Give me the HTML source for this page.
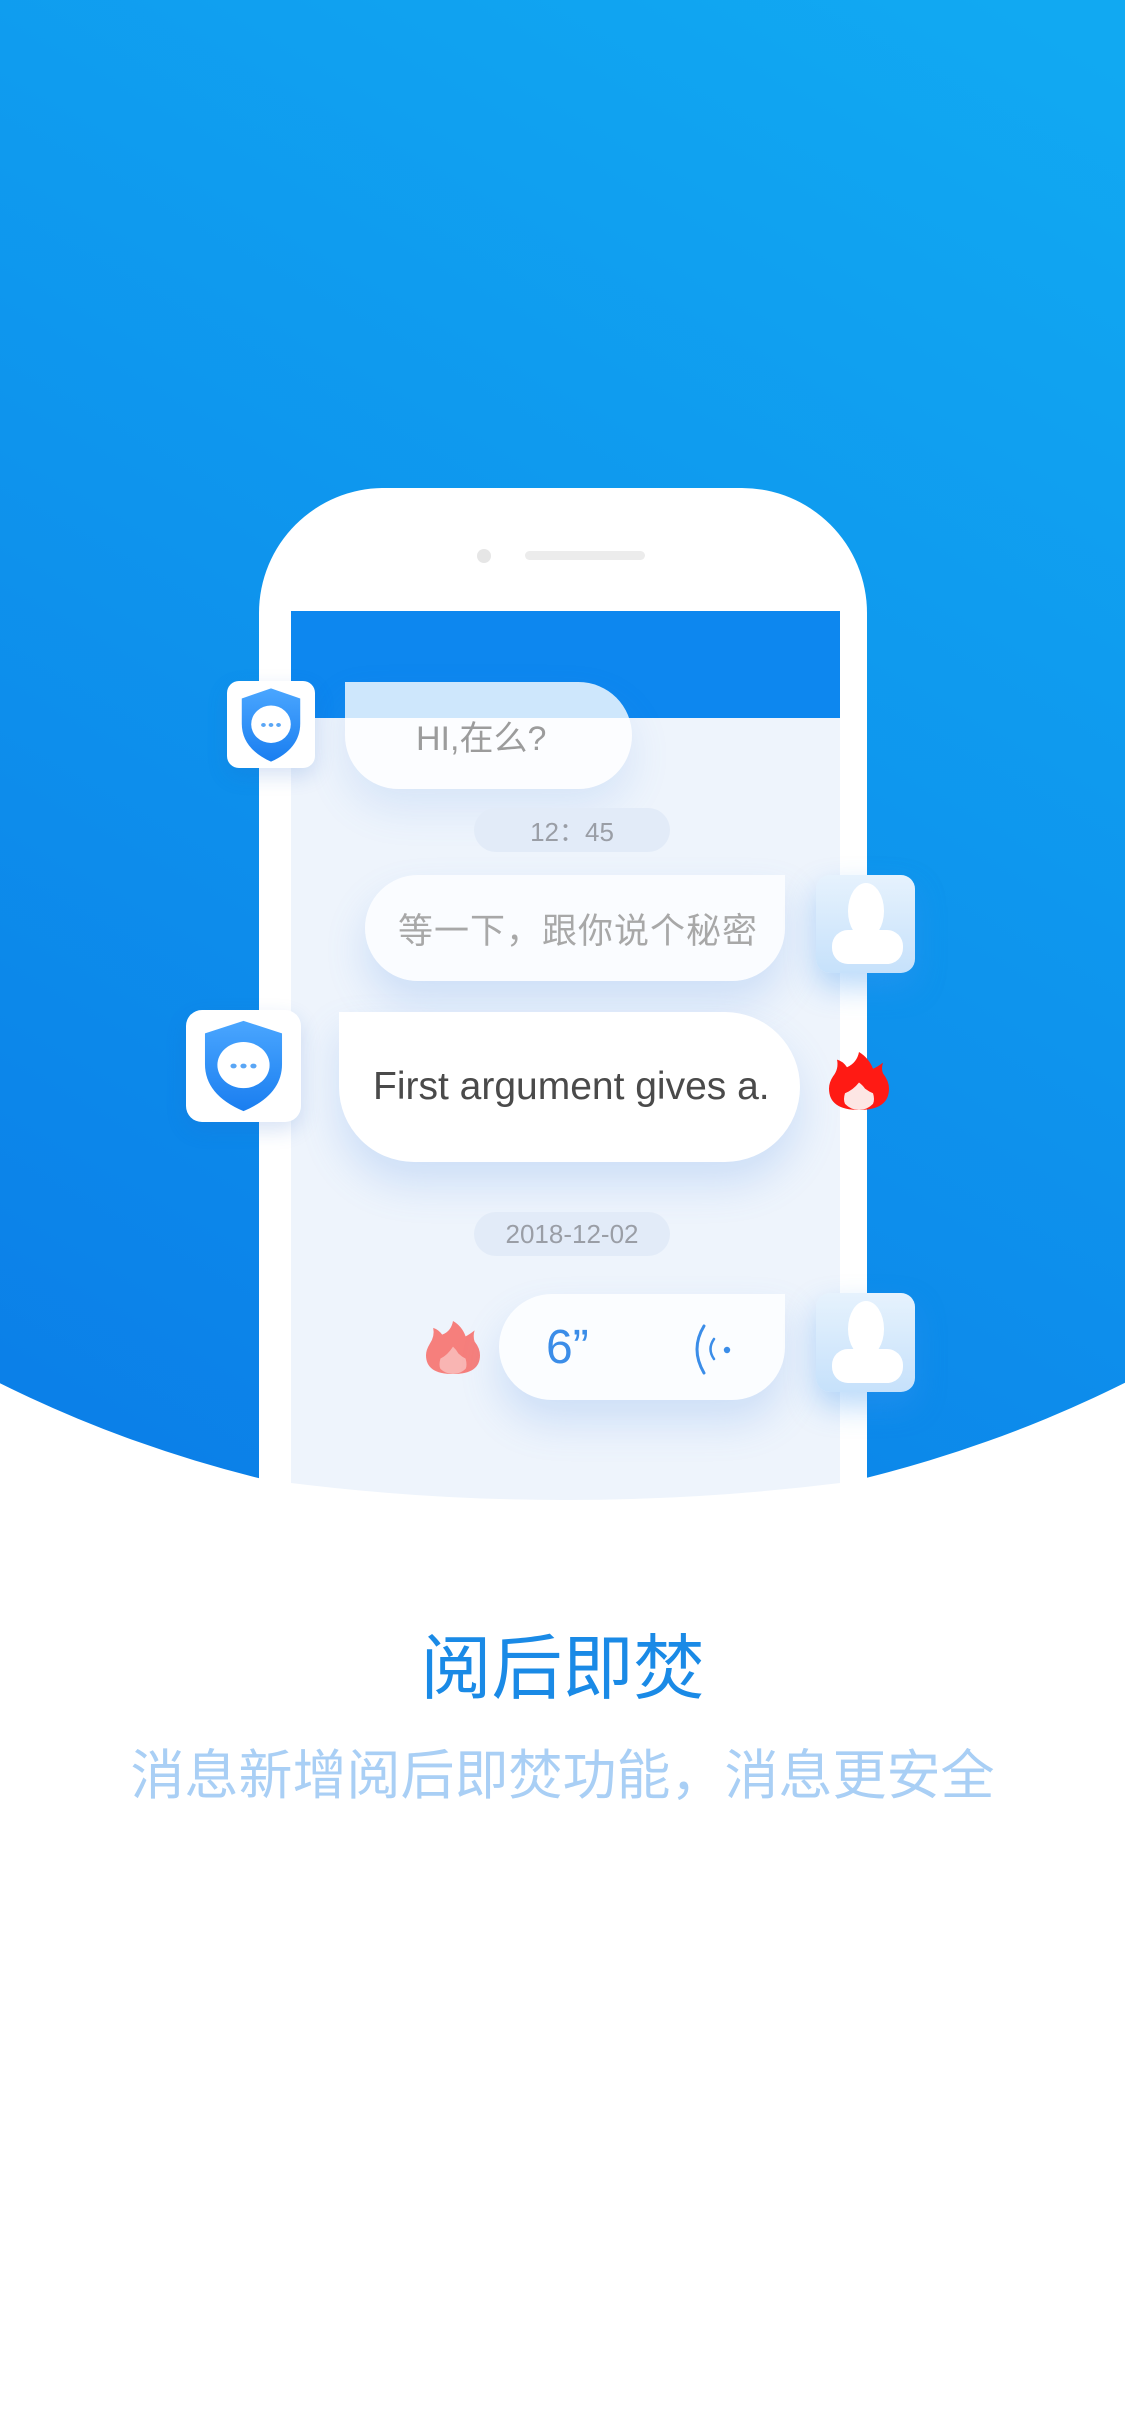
<!DOCTYPE html>
<html><head><meta charset="utf-8"><style>
*{margin:0;padding:0;box-sizing:border-box}
body{width:1125px;height:2436px;background:#fff;position:relative;overflow:hidden;font-family:"Liberation Sans","Noto Sans CJK SC",sans-serif}
.a{position:absolute}
.bub{position:absolute;display:flex;align-items:center;box-shadow:0 22px 40px rgba(90,150,230,0.22)}
.pill{position:absolute;background:#e2ebf8;border-radius:30px;color:#9a9ea6;display:flex;align-items:center;justify-content:center}
.sq{position:absolute;background:#fff;border-radius:14px;box-shadow:0 8px 20px rgba(40,100,200,0.18)}
.us{position:absolute;border-radius:14px;background:linear-gradient(180deg,#e6f2fd,#c6e1fb);box-shadow:0 14px 30px rgba(60,150,240,0.35);overflow:hidden}
</style></head><body>
<svg class="a" style="left:0;top:0" width="1125" height="1600">
<defs><linearGradient id="bg" gradientUnits="userSpaceOnUse" x1="1000" y1="0" x2="150" y2="1500"><stop offset="0" stop-color="#11a9f2"/><stop offset="1" stop-color="#0b7fe8"/></linearGradient>
<linearGradient id="sh" x1="0" y1="0" x2="0" y2="1"><stop offset="0" stop-color="#4aa6ff"/><stop offset="1" stop-color="#1a7ef0"/></linearGradient></defs>
<circle cx="562" cy="250" r="1265" fill="url(#bg)"/>
<rect x="259" y="488" width="608" height="1200" rx="125" fill="#fff"/>
<path d="M291 611H840V1483Q565 1517 291 1483Z" fill="#eef4fc"/>
<rect x="291" y="611" width="549" height="107" fill="#0d87ef"/>
<circle cx="484" cy="556" r="7" fill="#e6e6e6"/>
<rect x="525" y="551" width="120" height="9" rx="4.5" fill="#ececec"/>
</svg>

<!-- bubble 1 -->
<div class="bub" style="left:345px;top:682px;width:287px;height:107px;background:rgba(255,255,255,0.8);border-radius:0 54px 54px 54px;box-shadow:0 20px 40px rgba(90,150,230,0.15)">
<span style="margin-left:71px;font-size:34px;color:#9c9c9c">HI,在么?</span></div>
<div class="sq" style="left:227px;top:681px;width:88px;height:87px;border-radius:12px"></div>
<svg class="a" style="left:238px;top:686px" width="66" height="78" viewBox="0 0 70 100" preserveAspectRatio="none"><path d="M35 3L66 16V48Q66 80 35 97Q4 80 4 48V16Z" fill="url(#sh)"/><ellipse cx="35" cy="49" rx="21" ry="24" fill="#fff"/><circle cx="27" cy="50" r="2.5" fill="#5aa6f5"/><circle cx="35" cy="50" r="2.5" fill="#5aa6f5"/><circle cx="43" cy="50" r="2.5" fill="#5aa6f5"/></svg>

<div class="pill" style="left:474px;top:808px;width:196px;height:44px;font-size:26px">12：45</div>

<!-- bubble 2 -->
<div class="bub" style="left:365px;top:875px;width:420px;height:106px;background:rgba(250,252,255,0.95);border-radius:53px 0 53px 53px">
<span style="margin-left:33px;font-size:35px;color:#a8a8a8;letter-spacing:1px">等一下，跟你说个秘密</span></div>
<div class="us" style="left:816px;top:875px;width:99px;height:98px"><div class="a" style="left:32px;top:8px;width:36px;height:56px;border-radius:50%;background:#fff"></div><div class="a" style="left:16px;top:55px;width:71px;height:34px;border-radius:16px;background:#fff"></div></div>

<!-- bubble 3 -->
<div class="bub" style="left:339px;top:1012px;width:461px;height:150px;background:#fff;border-radius:0 75px 75px 75px">
<span style="margin-left:34px;font-size:39px;color:#4a4a4a">First argument gives a.</span></div>
<div class="sq" style="left:186px;top:1010px;width:115px;height:112px;border-radius:16px"></div>
<svg class="a" style="left:200px;top:1018px" width="87" height="96" viewBox="0 0 70 100" preserveAspectRatio="none"><path d="M35 3L66 16V48Q66 80 35 97Q4 80 4 48V16Z" fill="url(#sh)"/><ellipse cx="35" cy="49" rx="21" ry="24" fill="#fff"/><circle cx="27" cy="50" r="2.5" fill="#5aa6f5"/><circle cx="35" cy="50" r="2.5" fill="#5aa6f5"/><circle cx="43" cy="50" r="2.5" fill="#5aa6f5"/></svg>
<svg class="a" style="left:829px;top:1052px" width="60" height="58" viewBox="0 0 60 76" preserveAspectRatio="none"><path d="M30 0Q28 14 18 20Q14 12 8 10Q10 22 4 32Q0 40 0 48Q0 76 30 76Q60 76 60 48Q60 38 54 28Q52 22 54 14Q48 20 44 22Q40 8 30 0Z" fill="#ff1a14"/><path d="M30 40Q24 50 16 54Q14 62 16 68Q22 76 30 76Q38 76 44 68Q46 62 44 54Q40 52 36 48Q34 44 30 40Z" fill="#fde6e4"/></svg>

<div class="pill" style="left:474px;top:1212px;width:196px;height:44px;font-size:26px">2018-12-02</div>

<!-- voice -->
<svg class="a" style="left:426px;top:1321px" width="54" height="53" viewBox="0 0 60 62" preserveAspectRatio="none"><path d="M30 0Q28 12 18 16Q14 10 8 8Q10 18 4 27Q0 34 0 40Q0 62 30 62Q60 62 60 40Q60 32 54 24Q52 18 54 11Q48 16 44 18Q40 6 30 0Z" fill="#f67f7c"/><path d="M30 30Q24 40 16 44Q14 52 16 56Q22 62 30 62Q38 62 44 56Q46 52 44 44Q40 42 36 38Q34 34 30 30Z" fill="#f9b5b3"/></svg>
<div class="bub" style="left:499px;top:1294px;width:286px;height:106px;background:#fbfdff;border-radius:53px 0 53px 53px">
<span style="margin-left:47px;font-size:48px;color:#3b8de8">6”</span></div>
<svg class="a" style="left:690px;top:1322px" width="50" height="55" viewBox="0 0 50 55"><path d="M14 4Q0 27 14 51" stroke="#3b8de8" stroke-width="3" fill="none" stroke-linecap="round"/><path d="M24 17Q17 27 24 37" stroke="#3b8de8" stroke-width="2.5" fill="none" stroke-linecap="round"/><circle cx="37" cy="28" r="3.2" fill="#3b8de8"/></svg>
<div class="us" style="left:816px;top:1293px;width:99px;height:99px"><div class="a" style="left:32px;top:8px;width:36px;height:56px;border-radius:50%;background:#fff"></div><div class="a" style="left:16px;top:56px;width:71px;height:34px;border-radius:16px;background:#fff"></div></div>

<div class="a" style="left:0;top:1625px;width:1125px;text-align:center;font-size:71px;color:#1a8ae6;line-height:90px">阅后即焚</div>
<div class="a" style="left:0;top:1744px;width:1125px;text-align:center;font-size:54px;color:#a9cff5;line-height:64px">消息新增阅后即焚功能，消息更安全</div>
</body></html>
